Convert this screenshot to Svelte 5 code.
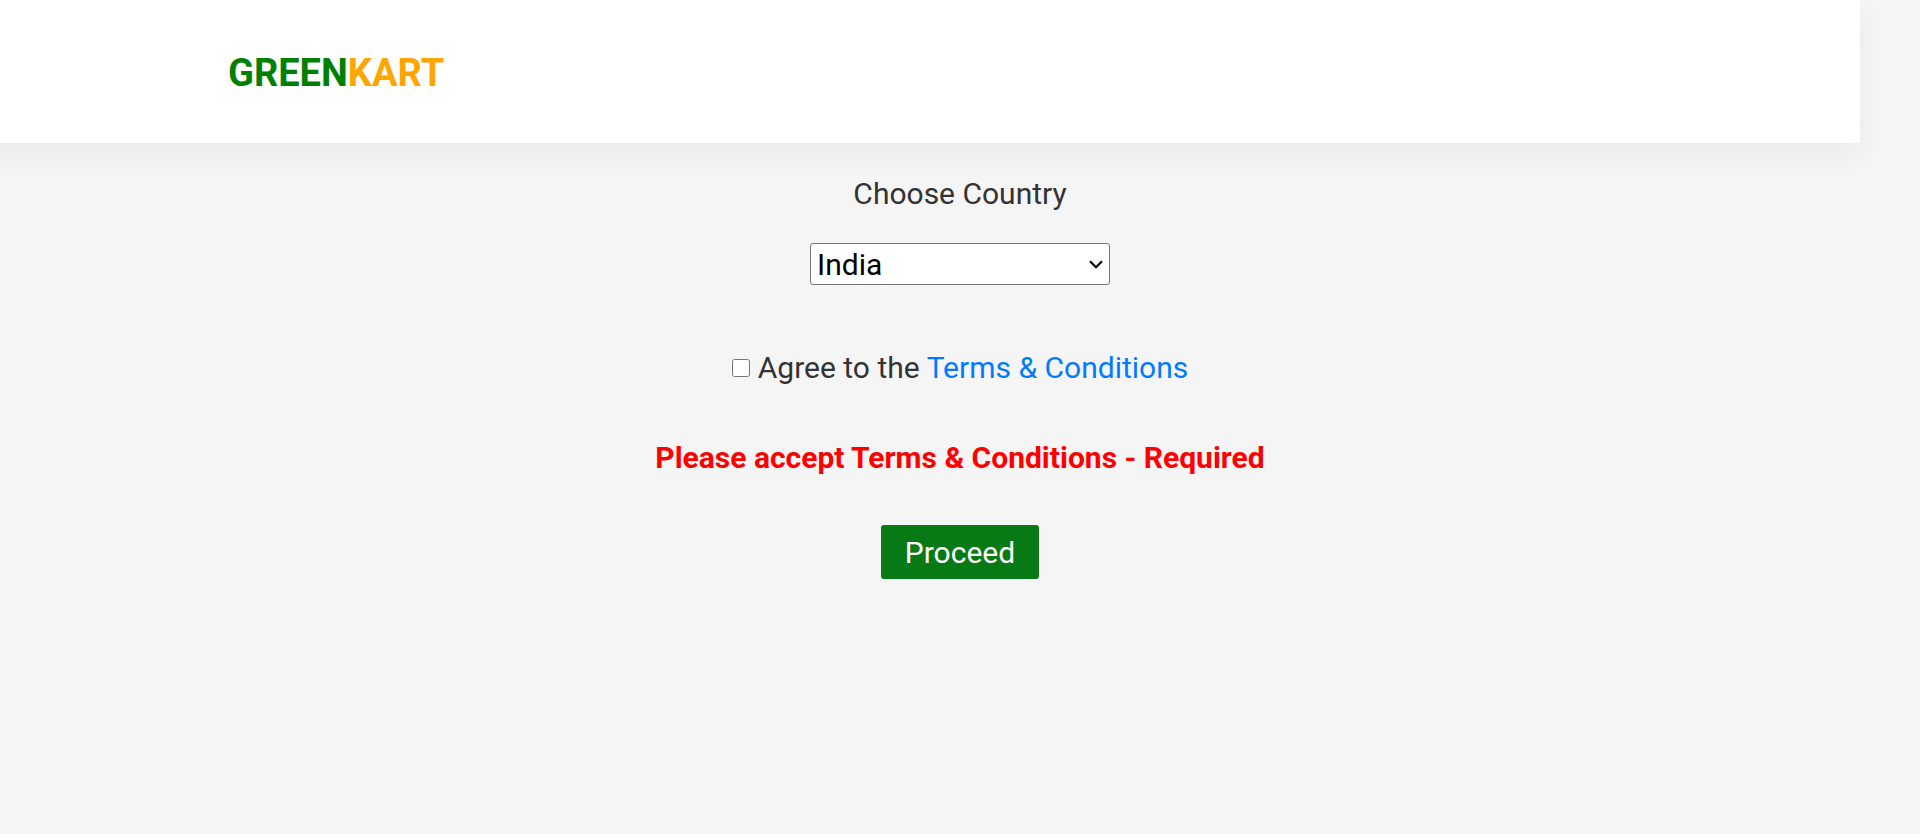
<script>
  let country = $state('India');
  let agreed = $state(false);
  const countries = ['India', 'Australia', 'Canada', 'Germany', 'United States'];
</script>

<header>
  <div class="brand">GREEN<span>KART</span></div>
</header>

<main>
  <label for="country">Choose Country</label>
  <div class="picker">
    <select id="country" bind:value={country}>
      {#each countries as name}
        <option>{name}</option>
      {/each}
    </select>
    <svg viewBox="0 0 14 9" width="14" height="9" aria-hidden="true">
      <path d="M1 1.2 L7 7.2 L13 1.2" fill="none" stroke="#000" stroke-width="2.2" />
    </svg>
  </div>
  <div class="terms">
    <input id="agree" type="checkbox" bind:checked={agreed} />
    <label for="agree">Agree to the</label>
    <a href="#terms">Terms &amp; Conditions</a>
  </div>
  <p class="alert">Please accept Terms &amp; Conditions - Required</p>
  <button type="button">Proceed</button>
</main>

<style>
  :global(body) {
    background: #f5f5f5;
    font-family: Roboto, sans-serif;
    font-size: 30px;
    line-height: 36px;
    color: #333;
  }
  header {
    margin: 0 60px 0 -60px;
    padding: 50px 288px 46px;
    background: #fff;
    box-shadow: 0 10px 30px rgba(0, 0, 0, 0.05);
  }
  .brand {
    font-size: 38px;
    line-height: 47px;
    font-weight: 700;
    color: green;
  }
  .brand span {
    color: orange;
  }
  main {
    display: flex;
    flex-direction: column;
    align-items: center;
    padding-top: 33px;
  }
  .picker {
    display: grid;
    align-items: center;
    width: 300px;
    margin-top: 31px;
  }
  .picker select,
  .picker svg {
    grid-area: 1 / 1;
  }
  .picker svg {
    justify-self: end;
    margin-right: 7px;
    pointer-events: none;
  }
  select {
    appearance: none;
    box-sizing: border-box;
    width: 100%;
    height: 42px;
    padding: 2px 24px 0 6px;
    font: inherit;
    color: #000;
    background: #fff;
    border: 1px solid #767676;
    border-radius: 3px;
  }
  .terms {
    display: flex;
    align-items: center;
    margin-top: 65px;
  }
  .terms input {
    width: 18px;
    height: 18px;
    margin: 0 8px 0 0;
  }
  a {
    margin-left: 7px;
    color: #007bff;
    text-decoration: none;
  }
  .alert {
    margin: 54px 0 0;
    font-weight: 700;
    color: red;
  }
  button {
    margin-top: 49px;
    padding: 10px 24px 8px;
    font: inherit;
    color: #fff;
    background: #077915;
    border: 0;
    border-radius: 3px;
  }
</style>
